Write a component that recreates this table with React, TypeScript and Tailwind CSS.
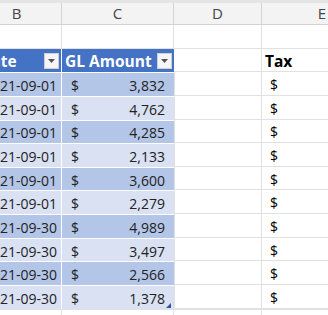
import React from "react";

// Spreadsheet fragment: columns B..E, table "Date / GL Amount" + Tax column
const rows = [
  { date: "2021-09-01", amount: "3,832" },
  { date: "2021-09-01", amount: "4,762" },
  { date: "2021-09-01", amount: "4,285" },
  { date: "2021-09-01", amount: "2,133" },
  { date: "2021-09-01", amount: "3,600" },
  { date: "2021-09-01", amount: "2,279" },
  { date: "2021-09-30", amount: "4,989" },
  { date: "2021-09-30", amount: "3,497" },
  { date: "2021-09-30", amount: "2,566" },
  { date: "2021-09-30", amount: "1,378" },
];

const FilterButton = () => (
  <div className="ml-auto mr-[2px] mb-[2px] w-[15px] h-[16px] shrink-0 bg-[#f5f5f5] border border-[#cfcfcf] flex items-center justify-center">
    <svg width="7" height="4" viewBox="0 0 7 4">
      <path d="M0 0 L7 0 L3.5 4 Z" fill="#555" />
    </svg>
  </div>
);

const App = () => {
  return (
    <div className="w-[328px] h-[315px] overflow-hidden bg-white font-['Open_Sans',sans-serif] text-[14px] text-[#222]">
      {/* column letters */}
      <div className="flex h-[25px] bg-[#f3f3f3] border-t-[3px] border-[#e4e4e4] text-[15px] text-[#444]">
        <div className="ml-[-28px] w-[90px] shrink-0 flex items-center justify-center border-r border-b border-[#d2d2d2]">B</div>
        <div className="w-[112px] shrink-0 flex items-center justify-center border-r border-b border-[#d2d2d2]">C</div>
        <div className="w-[88px] shrink-0 flex items-center justify-center border-r border-b border-[#d2d2d2]">D</div>
        <div className="w-[120px] shrink-0 flex items-center justify-center border-b border-[#d2d2d2]">E</div>
      </div>

      {/* row 1: empty */}
      <div className="flex h-[23.65px]">
        <div className="ml-[-28px] w-[90px] shrink-0 border-r border-b border-[#e1e1e1]" />
        <div className="w-[112px] shrink-0 border-r border-b border-[#e1e1e1]" />
        <div className="w-[88px] shrink-0 border-r border-b border-[#e1e1e1]" />
        <div className="w-[120px] shrink-0 border-b border-[#e1e1e1]" />
      </div>

      {/* table header */}
      <div className="flex h-[23.65px] font-bold text-[15.5px]">
        <div className="ml-[-28px] w-[90px] shrink-0 flex items-center pt-[3px] bg-[#4472c4] text-white pl-[8px] border-r border-white">
          Date
          <FilterButton />
        </div>
        <div className="w-[112px] shrink-0 flex items-center pt-[3px] bg-[#4472c4] text-white pl-[3px]">
          GL Amount
          <FilterButton />
        </div>
        <div className="w-[88px] shrink-0 border-r border-b border-[#e1e1e1]" />
        <div className="w-[120px] shrink-0 flex items-center pt-[3px] pl-[3px] text-black border-b border-[#e1e1e1]">Tax</div>
      </div>

      {/* table body */}
      {rows.map((r, i) => {
        const band = i % 2 === 0 ? "bg-[#b4c6e7]" : "bg-[#d9e1f2]";
        const last = i === rows.length - 1;
        return (
          <div key={i} className="flex h-[23.65px]">
            <div className={`ml-[-28px] w-[90px] shrink-0 flex items-center pt-[2px] justify-end pr-[4px] border-t border-r border-white ${band}`}>
              {r.date}
            </div>
            <div className={`relative w-[112px] shrink-0 flex items-center pt-[2px] pl-[9px] pr-[9px] border-t border-white ${band}`}>
              <span>$</span>
              <span className="ml-auto">{r.amount}</span>
              {last && (
                <svg className="absolute right-[3px] bottom-[1px]" width="5" height="5" viewBox="0 0 5 5">
                  <path d="M5 0 L5 5 L0 5 Z" fill="#2f5597" />
                </svg>
              )}
            </div>
            <div className="w-[88px] shrink-0 border-l border-r border-b border-[#e1e1e1]" />
            <div className="w-[120px] shrink-0 flex items-center pt-[2px] pl-[8px] text-black border-b border-[#e1e1e1]">$</div>
          </div>
        );
      })}

      {/* row below the table */}
      <div className="flex h-[23.65px] border-t border-[#e1e1e1]">
        <div className="ml-[-28px] w-[90px] shrink-0 border-r border-[#e1e1e1]" />
        <div className="w-[112px] shrink-0 border-r border-[#e1e1e1]" />
        <div className="w-[88px] shrink-0 border-r border-[#e1e1e1]" />
        <div className="w-[120px] shrink-0" />
      </div>
    </div>
  );
};

export default App;
